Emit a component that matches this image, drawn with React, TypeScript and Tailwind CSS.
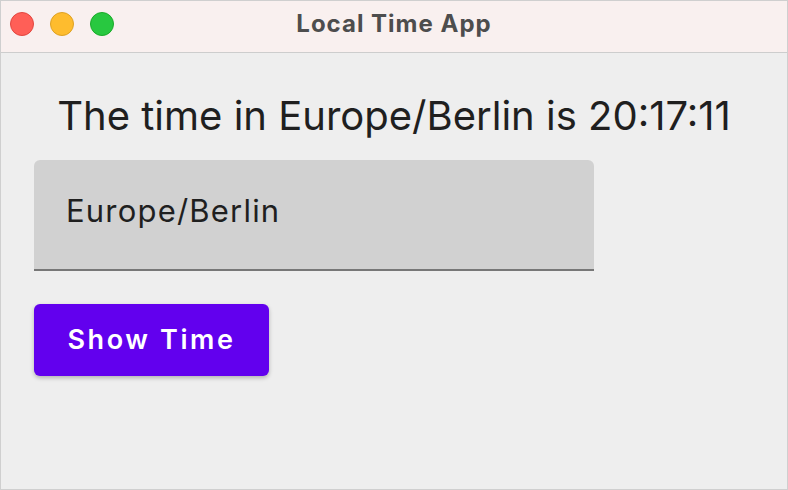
export default function App() {
  return (
    <div className="w-[788px] h-[490px] bg-[#eeeeee] border border-[#cfcfcf] flex flex-col overflow-hidden" style={{ fontFamily: "Inter, 'Liberation Sans', sans-serif" }}>
      <div className="relative h-[52px] shrink-0 bg-[#f9f0ef] border-b border-[#cdcdcd] flex items-center">
        <div className="flex items-center gap-4 pl-[9px] pb-[5px]">
          <span className="w-6 h-6 rounded-full bg-[#ff5f57] border border-[#e2463f]" />
          <span className="w-6 h-6 rounded-full bg-[#febc2e] border border-[#dea123]" />
          <span className="w-6 h-6 rounded-full bg-[#28c840] border border-[#1aab29]" />
        </div>
        <div className="absolute inset-0 flex items-center justify-center pb-[6px] text-[24px] font-bold tracking-[1px] text-[#4d4d4d]">
          Local Time App
        </div>
      </div>
      <div className="flex flex-col px-[33px]">
        <h1 className="mt-[39px] text-center text-[40px] leading-[48px] text-[#1f1f1f]">
          The time in Europe/Berlin is 20:17:11
        </h1>
        <div className="mt-[20px] w-[560px] h-[111px] bg-[#d1d1d1] rounded-t-[6px] border-b-2 border-[#777777] flex items-center pl-[32px] pb-[6px] text-[31px] tracking-[1.2px] text-[#1f1f1f]">
          Europe/Berlin
        </div>
        <button className="mt-[33px] w-[235px] h-[72px] bg-[#6200ee] rounded-[6px] shadow-[0_2px_4px_rgba(0,0,0,0.25)] text-white text-[27px] font-semibold tracking-[2.6px] flex items-center justify-center">
          Show Time
        </button>
      </div>
    </div>
  );
}
